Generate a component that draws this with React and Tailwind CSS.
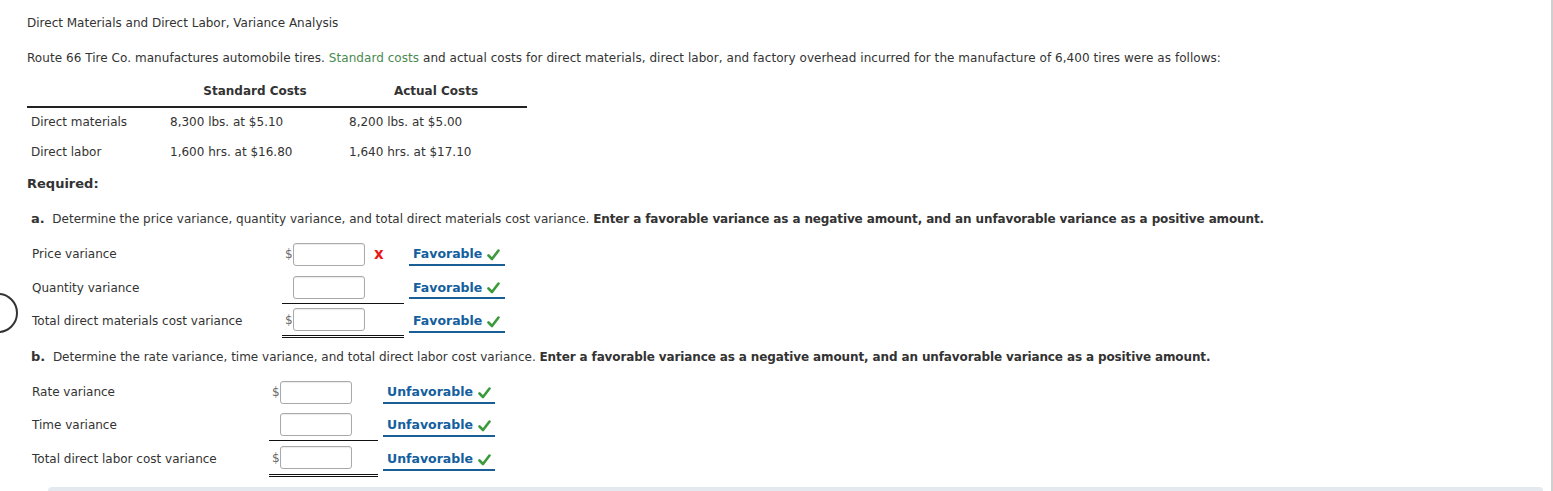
import React from 'react'

const font = { fontFamily: '"DejaVu Sans", Verdana, sans-serif' }

function Check() {
  return (
    <svg width="13" height="12" viewBox="0 0 13 12" className="inline-block ml-[5px] -mt-[2px]">
      <path d="M1.5 6.5 L5 10 L11.5 1.5" fill="none" stroke="#3b9a3b" strokeWidth="2.6" strokeLinecap="round" strokeLinejoin="round" />
    </svg>
  )
}

function Choice({ label, width }) {
  return (
    <div className={`h-[23px] flex items-end border-b-2 border-[#1a5e96] pl-[4px] pb-[3px] ${width}`}>
      <span className="text-[12.5px] font-bold text-[#14609e] leading-none">{label}</span>
      <Check />
    </div>
  )
}

function AnswerRow({ label, dollar, mark, border, labelW, cellW, choice, choiceW, rowH }) {
  return (
    <div className={`flex items-center ${rowH}`}>
      <div className={`${labelW} text-[12px] text-[#333] pl-[5px]`}>{label}</div>
      <div className={`${cellW} h-full flex items-center ${border}`}>
        <span className="w-[11px] text-[12px] text-[#6b6b6b] pl-[3px] leading-none">{dollar ? '$' : ''}</span>
        <div className="w-[72px] h-[23px] border border-[#a9a9a9] rounded-[3px] bg-white shadow-[inset_0_1px_1px_rgba(0,0,0,0.08)]" />
        {mark && <span className="ml-[9px] text-[15px] font-bold text-[#e8181b] leading-none">x</span>}
      </div>
      <div className="ml-[5px]">
        <Choice label={choice} width={choiceW} />
      </div>
    </div>
  )
}

export default function App() {
  return (
    <div className="relative w-[1553px] h-[491px] bg-white overflow-hidden text-[#333]" style={font}>
      <div className="absolute left-[-22px] top-[293px] w-[40px] h-[40px] rounded-full border-2 border-[#333]" />
      <div className="absolute right-0 top-0 w-[2px] h-full bg-[#cfcfcf]" />

      <div className="pl-[27px] pt-[15px]">
        <p className="text-[12px] leading-[16px]">Direct Materials and Direct Labor, Variance Analysis</p>
        <p className="mt-[19px] text-[12px] leading-[16px] tracking-[0.05px]">
          Route 66 Tire Co. manufactures automobile tires. <span className="text-[#4a8a4f]">Standard costs</span> and actual costs for direct materials, direct labor, and factory overhead incurred for the manufacture of 6,400 tires were as follows:
        </p>

        <table className="mt-[17px] w-[500px] border-collapse text-[12px] leading-[16px]">
          <thead>
            <tr className="border-b-2 border-[#222]">
              <th className="w-[138px]" />
              <th className="w-[180px] text-center font-bold pb-[7px]">Standard Costs</th>
              <th className="text-center font-bold pb-[7px]">Actual Costs</th>
            </tr>
          </thead>
          <tbody>
            <tr>
              <td className="pl-[4px] pt-[6px] pb-[8px]">Direct materials</td>
              <td className="pl-[5px] pt-[6px] pb-[8px]">8,300 lbs. at $5.10</td>
              <td className="pl-[4px] pt-[6px] pb-[8px]">8,200 lbs. at $5.00</td>
            </tr>
            <tr>
              <td className="pl-[4px] pt-[6px] pb-[8px]">Direct labor</td>
              <td className="pl-[5px] pt-[6px] pb-[8px]">1,600 hrs. at $16.80</td>
              <td className="pl-[4px] pt-[6px] pb-[8px]">1,640 hrs. at $17.10</td>
            </tr>
          </tbody>
        </table>

        <p className="mt-[8px] text-[13px] font-bold leading-[16px]">Required:</p>

        <p className="mt-[19px] pl-[4px] text-[12px] leading-[16px]">
          <b className="text-[13px]">a.</b>&nbsp; Determine the price variance, quantity variance, and total direct materials cost variance. <b className="tracking-[-0.12px]">Enter a favorable variance as a negative amount, and an unfavorable variance as a positive amount.</b>
        </p>

        <div className="mt-[10px]">
          <AnswerRow label="Price variance" dollar mark border="" labelW="w-[255px]" cellW="w-[122px]" choice="Favorable" choiceW="w-[96px]" rowH="h-[34px]" />
          <AnswerRow label="Quantity variance" border="border-b border-[#111]" labelW="w-[255px]" cellW="w-[122px]" choice="Favorable" choiceW="w-[96px]" rowH="h-[33px]" />
          <AnswerRow label="Total direct materials cost variance" dollar border="border-b-[3px] border-double border-[#111]" labelW="w-[255px]" cellW="w-[122px]" choice="Favorable" choiceW="w-[96px]" rowH="h-[34px]" />
        </div>

        <p className="mt-[11px] pl-[4px] text-[12px] leading-[16px]">
          <b className="text-[13px]">b.</b>&nbsp; Determine the rate variance, time variance, and total direct labor cost variance. <b className="tracking-[-0.12px]">Enter a favorable variance as a negative amount, and an unfavorable variance as a positive amount.</b>
        </p>

        <div className="mt-[10px]">
          <AnswerRow label="Rate variance" dollar border="" labelW="w-[242px]" cellW="w-[109px]" choice="Unfavorable" choiceW="w-[112px]" rowH="h-[34px]" />
          <AnswerRow label="Time variance" border="border-b border-[#111]" labelW="w-[242px]" cellW="w-[109px]" choice="Unfavorable" choiceW="w-[112px]" rowH="h-[32px]" />
          <AnswerRow label="Total direct labor cost variance" dollar border="border-b-[3px] border-double border-[#111]" labelW="w-[242px]" cellW="w-[109px]" choice="Unfavorable" choiceW="w-[112px]" rowH="h-[36px]" />
        </div>
      </div>

      <div className="absolute left-[48px] top-[487px] w-[1495px] h-[10px] rounded-t-[4px] bg-[#e3e9ee]" />
    </div>
  )
}
